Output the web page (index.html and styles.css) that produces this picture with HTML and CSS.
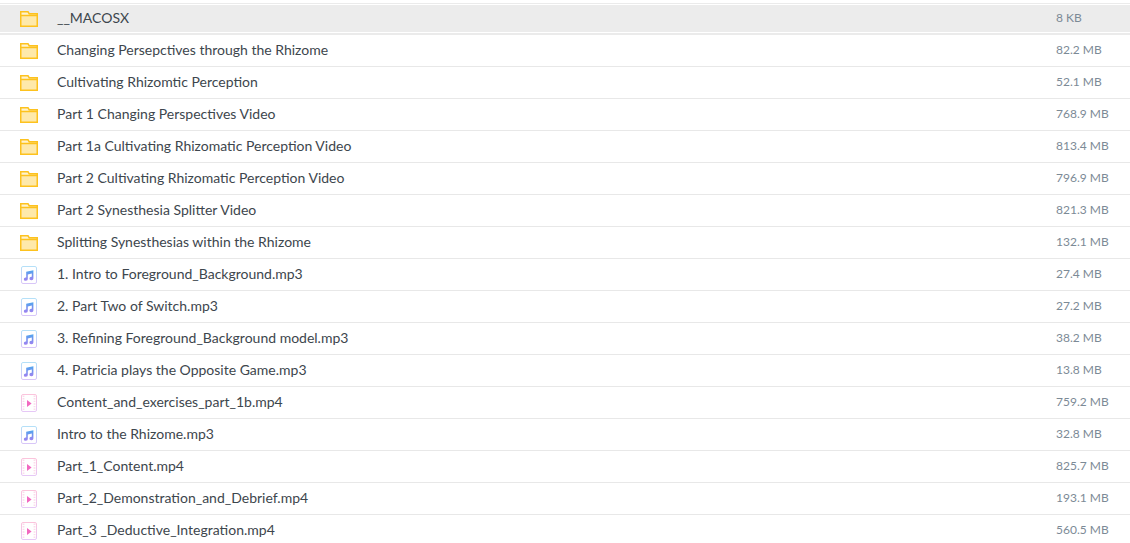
FILE: index.html
```html
<!DOCTYPE html>
<html lang="en">
<head>
<meta charset="utf-8">
<title>Files</title>
<link rel="stylesheet" href="styles.css">
</head>
<body>
<svg class="defs" width="0" height="0" aria-hidden="true">
  <defs>
    <linearGradient id="mg" x1="0" y1="0" x2="0" y2="1"><stop offset="0" stop-color="#4fa6ee"/><stop offset="1" stop-color="#a080f0"/></linearGradient>
    <linearGradient id="mb" x1="0" y1="0" x2="0" y2="1"><stop offset="0" stop-color="#b5e0f8"/><stop offset="1" stop-color="#d8c6f8"/></linearGradient>
    <linearGradient id="vb" x1="0" y1="0" x2="0" y2="1"><stop offset="0" stop-color="#fbc4dc"/><stop offset="1" stop-color="#e6c8f6"/></linearGradient>
    <symbol id="folder" viewBox="0 0 18 16"><path d="M.75 15.25V.75H8l1.2 2H17.25v12.5z" fill="#fee9ab"/><path d="M.75 4.75V.75H8l1.2 2H17.25v2z" fill="#fff3cf"/><path d="M.75 15.25V.75H8l1.2 2H17.25v12.5zM.75 4.6h16.5" fill="none" stroke="#fdc21e" stroke-width="1.5"/></symbol>
    <symbol id="audio" viewBox="0 0 16 18"><rect x=".5" y=".5" width="15" height="17" rx="1.5" fill="#fff" stroke="url(#mb)"/><path d="M5.2 5.8 12.4 4.2v8.2a2 1.7 0 1 1-1.6-1.6V7.6L6.8 8.5v4.6a2 1.7 0 1 1-1.6-1.6z" fill="url(#mg)"/></symbol>
    <symbol id="video" viewBox="0 0 16 18"><rect x=".5" y=".5" width="15" height="17" rx="1.5" fill="#fff" stroke="url(#vb)"/><path d="M2.5 1.5v15M13.5 1.5v15" stroke="#fbdcea" stroke-width="1.8" stroke-dasharray="1.4 1.2"/><path d="M6 6 10.6 9.5 6 13z" fill="#f268c0"/></symbol>
  </defs>
</svg>
<ul class="list">
  <li class="row row-active"><svg class="icon"><use href="#folder"/></svg><span class="name">__MACOSX</span><span class="size">8 KB</span></li>
  <li class="row"><svg class="icon"><use href="#folder"/></svg><span class="name">Changing Persepctives through the Rhizome</span><span class="size">82.2 MB</span></li>
  <li class="row"><svg class="icon"><use href="#folder"/></svg><span class="name">Cultivating Rhizomtic Perception</span><span class="size">52.1 MB</span></li>
  <li class="row"><svg class="icon"><use href="#folder"/></svg><span class="name">Part 1 Changing Perspectives Video</span><span class="size">768.9 MB</span></li>
  <li class="row"><svg class="icon"><use href="#folder"/></svg><span class="name">Part 1a Cultivating Rhizomatic Perception Video</span><span class="size">813.4 MB</span></li>
  <li class="row"><svg class="icon"><use href="#folder"/></svg><span class="name">Part 2 Cultivating Rhizomatic Perception Video</span><span class="size">796.9 MB</span></li>
  <li class="row"><svg class="icon"><use href="#folder"/></svg><span class="name">Part 2 Synesthesia Splitter Video</span><span class="size">821.3 MB</span></li>
  <li class="row"><svg class="icon"><use href="#folder"/></svg><span class="name">Splitting Synesthesias within the Rhizome</span><span class="size">132.1 MB</span></li>
  <li class="row"><svg class="icon file"><use href="#audio"/></svg><span class="name">1. Intro to Foreground_Background.mp3</span><span class="size">27.4 MB</span></li>
  <li class="row"><svg class="icon file"><use href="#audio"/></svg><span class="name">2. Part Two of Switch.mp3</span><span class="size">27.2 MB</span></li>
  <li class="row"><svg class="icon file"><use href="#audio"/></svg><span class="name">3. Refining Foreground_Background model.mp3</span><span class="size">38.2 MB</span></li>
  <li class="row"><svg class="icon file"><use href="#audio"/></svg><span class="name">4. Patricia plays the Opposite Game.mp3</span><span class="size">13.8 MB</span></li>
  <li class="row"><svg class="icon file"><use href="#video"/></svg><span class="name">Content_and_exercises_part_1b.mp4</span><span class="size">759.2 MB</span></li>
  <li class="row"><svg class="icon file"><use href="#audio"/></svg><span class="name">Intro to the Rhizome.mp3</span><span class="size">32.8 MB</span></li>
  <li class="row"><svg class="icon file"><use href="#video"/></svg><span class="name">Part_1_Content.mp4</span><span class="size">825.7 MB</span></li>
  <li class="row"><svg class="icon file"><use href="#video"/></svg><span class="name">Part_2_Demonstration_and_Debrief.mp4</span><span class="size">193.1 MB</span></li>
  <li class="row"><svg class="icon file"><use href="#video"/></svg><span class="name">Part_3 _Deductive_Integration.mp4</span><span class="size">560.5 MB</span></li>
</ul>
</body>
</html>
```
FILE: styles.css
```css
html, body {
  margin: 0;
  padding: 0;
  background: #fff;
  overflow: hidden;
}
body {
  height: 543px;
  font-family: Lato, "Liberation Sans", sans-serif;
  color: #3d464d;
}
.defs {
  position: absolute;
}
.list {
  list-style: none;
  margin: 0;
  padding: 3px 0 0;
}
.row {
  display: flex;
  align-items: center;
  box-sizing: border-box;
  height: 32px;
  padding-bottom: 2px;
  border-bottom: 1px solid #e8e8e8;
  font-size: 14px;
  text-rendering: optimizeLegibility;
}
.row-active {
  padding-top: 1px;
  padding-bottom: 3px;
  border-top: 1px solid #ebebeb;
  border-bottom: 2px solid #ebebeb;
  background: linear-gradient(#ececec, #ececec) 0 1px / 100% 27px no-repeat;
}
.icon {
  flex: none;
  width: 18px;
  height: 16px;
  margin: 3px 19px 0 20px;
}
.icon.file {
  width: 16px;
  height: 18px;
  margin: 3px 20px 0 21px;
}
.name {
  flex: 1;
}
.size {
  flex: none;
  width: 74px;
  font-size: 12px;
  color: #7c8a96;
}
```
